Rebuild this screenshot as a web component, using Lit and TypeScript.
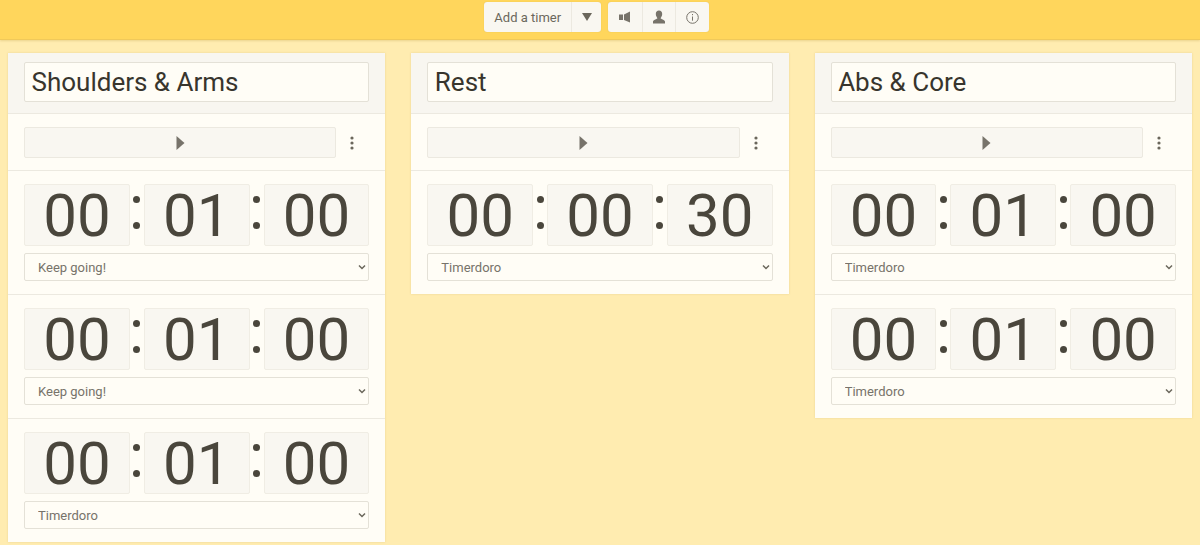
import { LitElement, html, css, svg } from "lit";
import { customElement } from "lit/decorators.js";

type Col = { title: string; timers: { h: string; m: string; s: string; sound: string }[] };

const cols: Col[] = [
  {
    title: "Shoulders & Arms",
    timers: [
      { h: "00", m: "01", s: "00", sound: "Keep going!" },
      { h: "00", m: "01", s: "00", sound: "Keep going!" },
      { h: "00", m: "01", s: "00", sound: "Timerdoro" },
    ],
  },
  { title: "Rest", timers: [{ h: "00", m: "00", s: "30", sound: "Timerdoro" }] },
  {
    title: "Abs & Core",
    timers: [
      { h: "00", m: "01", s: "00", sound: "Timerdoro" },
      { h: "00", m: "01", s: "00", sound: "Timerdoro" },
    ],
  },
];

@customElement("app-root")
export class AppRoot extends LitElement {
  static styles = css`
    :host {
      display: block;
      width: 1200px;
      height: 545px;
      overflow: hidden;
      background: #ffecb0;
      font-family: Roboto, "Liberation Sans", sans-serif;
      color: #4a463c;
    }
    .bar {
      height: 40px;
      box-sizing: border-box;
      background: #ffd65c;
      border-bottom: 1px solid #f0c95a;
      box-shadow: 0 1px 2px rgba(150, 110, 0, 0.2);
      display: flex;
      justify-content: center;
      align-items: flex-start;
      gap: 7px;
      padding: 2px 7px 0 0;
    }
    .group {
      display: flex;
      height: 30px;
      background: #f9f7f1;
      border-radius: 3px;
      box-shadow: 0 0 1px rgba(120, 100, 40, 0.3);
    }
    .tb {
      display: flex;
      align-items: center;
      justify-content: center;
      height: 30px;
      box-sizing: border-box;
      border-left: 1px solid #ece9e0;
      font-size: 13px;
      color: #6b675c;
    }
    .tb:first-child {
      border-left: none;
    }
    .add {
      width: 87px;
    }
    .drop {
      width: 30px;
    }
    .ic {
      width: 33.5px;
    }
    .columns {
      display: flex;
      gap: 26px;
      padding: 13px 8px 0;
      align-items: flex-start;
    }
    .card {
      flex: 1 1 0;
      min-width: 0;
      background: #fffdf6;
      box-shadow: 0 0 2px rgba(150, 120, 40, 0.2);
    }
    .head {
      height: 61px;
      box-sizing: border-box;
      background: #f8f6f0;
      border-bottom: 1px solid #ece9e0;
      padding: 9px 16px 0;
    }
    .title {
      display: block;
      width: 100%;
      height: 40px;
      box-sizing: border-box;
      border: 1px solid #e4e1d7;
      border-radius: 2px;
      background: #fffdf6;
      font: 400 26px Roboto, sans-serif;
      color: #38352d;
      padding: 0 6.5px;
      outline: none;
    }
    .play {
      height: 57px;
      box-sizing: border-box;
      border-bottom: 1px solid #ece9e0;
      padding: 13px 16px 0;
      display: flex;
    }
    .playbtn {
      flex: 1;
      height: 31px;
      box-sizing: border-box;
      background: #f9f7f1;
      border: 1px solid #ece9e0;
      border-radius: 2px;
      display: flex;
      align-items: center;
      justify-content: center;
    }
    .more {
      width: 32px;
      margin-right: 1px;
      height: 31px;
      display: flex;
      align-items: center;
      justify-content: center;
    }
    .timer {
      height: 124px;
      box-sizing: border-box;
      border-bottom: 1px solid #ece9e0;
      padding: 13px 16px 0;
    }
    .timer:last-child {
      border-bottom: none;
      height: 123px;
    }
    .clock {
      display: flex;
      align-items: flex-start;
      height: 63px;
    }
    .cell {
      flex: 1;
      height: 62px;
      box-sizing: border-box;
      background: #f9f7f1;
      border: 1px solid #f0ede4;
      border-radius: 2px;
      font-size: 60px;
      line-height: 62px;
      text-align: center;
      color: #4a463c;
    }
    .sep {
      width: 14px;
      flex: none;
      height: 62px;
      display: flex;
      flex-direction: column;
      align-items: center;
      gap: 19px;
      padding-top: 12px;
      box-sizing: border-box;
    }
    .sep i {
      width: 7px;
      height: 7px;
      border-radius: 50%;
      background: #4a463c;
      display: block;
    }
    .pick {
      position: relative;
      margin-top: 6px;
    }
    select {
      display: block;
      width: 100%;
      height: 28px;
      box-sizing: border-box;
      border: 1px solid #e4e1d7;
      border-radius: 2px;
      background: #fffdf6;
      font: 400 13px Roboto, sans-serif;
      color: #77736a;
      padding: 0 13px;
      outline: none;
      appearance: none;
    }
    .chev {
      position: absolute;
      right: 1px;
      top: 11px;
      pointer-events: none;
    }
  `;

  private speaker() {
    return svg`<svg width="12" height="12" viewBox="0 0 12 12"><rect x="0" y="3.500" width="4" height="5.500" fill="#77736a"/><path d="M5 3.500 L11 0.500 V11.500 L5 9 Z" fill="#77736a"/></svg>`;
  }
  private person() {
    return svg`<svg width="14" height="14" viewBox="0 0 14 14"><path d="M7 0.500c2 0 3.200 1.500 3.200 3.500S9 7.500 8.600 8.300c0 .8 4.400 1.600 4.400 3.200V13.500H1V11.500c0-1.600 4.400-2.400 4.400-3.200C5 7.500 3.800 6 3.800 4S5 0.500 7 0.500Z" fill="#77736a"/></svg>`;
  }
  private info() {
    return svg`<svg width="13" height="13" viewBox="0 0 13 13" fill="none" stroke="#77736a"><circle cx="6.500" cy="6.500" r="5.800"/><path d="M6.500 5.500v4.200"/><path d="M6.500 3v1.200"/></svg>`;
  }

  render() {
    return html`
      <div class="bar">
        <div class="group">
          <div class="tb add">Add a timer</div>
          <div class="tb drop">
            <svg width="12" height="10" viewBox="0 0 12 10"><path d="M1 1H11L6 9Z" fill="#6b675c" /></svg>
          </div>
        </div>
        <div class="group">
          <div class="tb ic">${this.speaker()}</div>
          <div class="tb ic">${this.person()}</div>
          <div class="tb ic">${this.info()}</div>
        </div>
      </div>
      <div class="columns">
        ${cols.map(
          (c) => html`
            <section class="card">
              <div class="head"><input class="title" .value=${c.title} /></div>
              <div class="play">
                <div class="playbtn">
                  <svg width="9" height="14" viewBox="0 0 9 14"><path d="M0.500 0V14L8.500 7Z" fill="#77736a" /></svg>
                </div>
                <div class="more">
                  <svg width="4" height="14" viewBox="0 0 4 14" fill="#6b675c">
                    <circle cx="2" cy="2" r="1.600" /><circle cx="2" cy="7" r="1.600" /><circle cx="2" cy="12" r="1.600" />
                  </svg>
                </div>
              </div>
              ${c.timers.map(
                (t) => html`
                  <div class="timer">
                    <div class="clock">
                      <div class="cell">${t.h}</div>
                      <div class="sep"><i></i><i></i></div>
                      <div class="cell">${t.m}</div>
                      <div class="sep"><i></i><i></i></div>
                      <div class="cell">${t.s}</div>
                    </div>
                    <div class="pick">
                      <select><option>${t.sound}</option></select>
                      <svg class="chev" width="12" height="7" viewBox="0 0 12 7" fill="none" stroke="#6b675c" stroke-width="1.500"><path d="M3 1.500L6 4.500L9 1.500" /></svg>
                    </div>
                  </div>
                `
              )}
            </section>
          `
        )}
      </div>
    `;
  }
}
